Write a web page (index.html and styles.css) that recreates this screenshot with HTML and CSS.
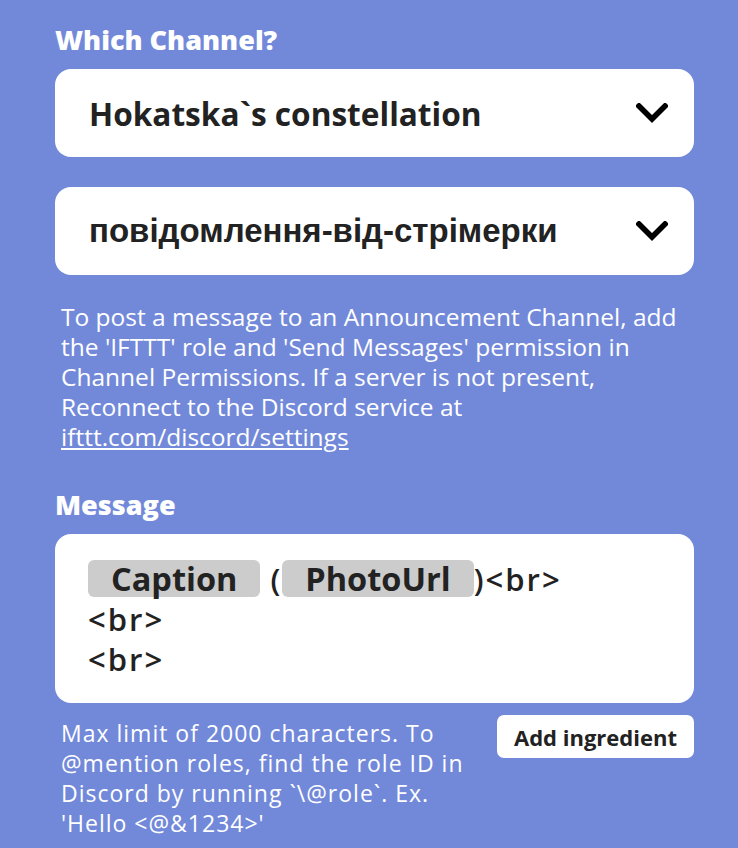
FILE: index.html
```html
<!DOCTYPE html>
<html lang="en">
<head>
<meta charset="utf-8">
<link rel="stylesheet" href="styles.css">
</head>
<body>
<main class="page">
  <h2 class="label label-first">Which Channel?</h2>
  <div class="select">
    <span class="select-text">Hokatska`s constellation</span>
    <svg class="chevron" viewBox="0 0 32 20" width="32" height="20"><path d="M3 3 L16 16 L29 3" fill="none" stroke="#000" stroke-width="5.5" stroke-linecap="square"/></svg>
  </div>
  <div class="select select-second">
    <span class="select-text cyr">повідомлення-від-стрімерки</span>
    <svg class="chevron" viewBox="0 0 32 20" width="32" height="20"><path d="M3 3 L16 16 L29 3" fill="none" stroke="#000" stroke-width="5.5" stroke-linecap="square"/></svg>
  </div>
  <p class="help">To post a message to an Announcement Channel, add the 'IFTTT' role and 'Send Messages' permission in Channel Permissions. If a server is not present, Reconnect to the Discord service at <a href="#">ifttt.com/discord/settings</a></p>
  <h2 class="label label-message">Message</h2>
  <div class="message">
    <div class="msg-line"><span class="pill">Caption</span> (<span class="pill">PhotoUrl</span>)&lt;br&gt;</div>
    <div class="msg-line">&lt;br&gt;</div>
    <div class="msg-line">&lt;br&gt;</div>
  </div>
  <div class="footer">
    <p class="note">Max limit of 2000 characters. To @mention roles, find the role ID in Discord by running `\@role`. Ex. 'Hello &lt;@&amp;1234&gt;'</p>
    <button class="add-btn">Add ingredient</button>
  </div>
</main>
</body>
</html>
```

FILE: styles.css
```css
html, body {
  margin: 0;
  padding: 0;
  background: #7289da;
}
body {
  font-family: "Open Sans", "Noto Sans", sans-serif;
  color: #fff;
}
.page {
  padding: 24px 44px 0 55px;
}
.label {
  margin: 0;
  font-size: 27px;
  font-weight: 800;
  line-height: 32px;
  color: #fff;
}
.label-first {
  margin-bottom: 13px;
}
.select {
  background: #fff;
  border-radius: 16px;
  height: 88px;
  display: flex;
  align-items: center;
  justify-content: space-between;
  padding: 0 26px 0 34px;
  box-sizing: border-box;
}
.select-second {
  margin-top: 30px;
}
.select-text {
  font-size: 31.6px;
  font-weight: 700;
  color: #222;
}
.select-text.cyr {
  font-family: "Liberation Sans", Arial, sans-serif;
  font-weight: 700;
  font-size: 33px;
}
.chevron {
  display: block;
}
.help {
  margin: 27px 0 0 6px;
  font-size: 24.5px;
  line-height: 30px;
  font-weight: 400;
}
.help a {
  color: #fff;
  text-decoration: underline;
}
.label-message {
  margin-top: 37px;
  margin-bottom: 13px;
}
.message {
  background: #fff;
  border-radius: 16px;
  height: 169px;
  box-sizing: border-box;
  padding: 25px 33px;
  color: #222;
  font-size: 31px;
  font-weight: 600;
  line-height: 40px;
  letter-spacing: 2px;
}
.pill {
  display: inline-block;
  background: #ccc;
  border-radius: 6px;
  line-height: 37px;
  padding: 0 23px;
  font-size: 32.5px;
  font-weight: 700;
  letter-spacing: 0;
}
.footer {
  display: flex;
  justify-content: space-between;
  align-items: flex-start;
  margin-top: 12px;
}
.note {
  margin: 3px 0 0 6px;
  width: 415px;
  font-size: 23px;
  letter-spacing: 1px;
  line-height: 30px;
}
.add-btn {
  background: #fff;
  border: none;
  border-radius: 7px;
  height: 43px;
  width: 197px;
  font-family: "Open Sans", "Noto Sans", sans-serif;
  font-size: 22px;
  font-weight: 700;
  color: #222;
  padding: 0;
}
```
